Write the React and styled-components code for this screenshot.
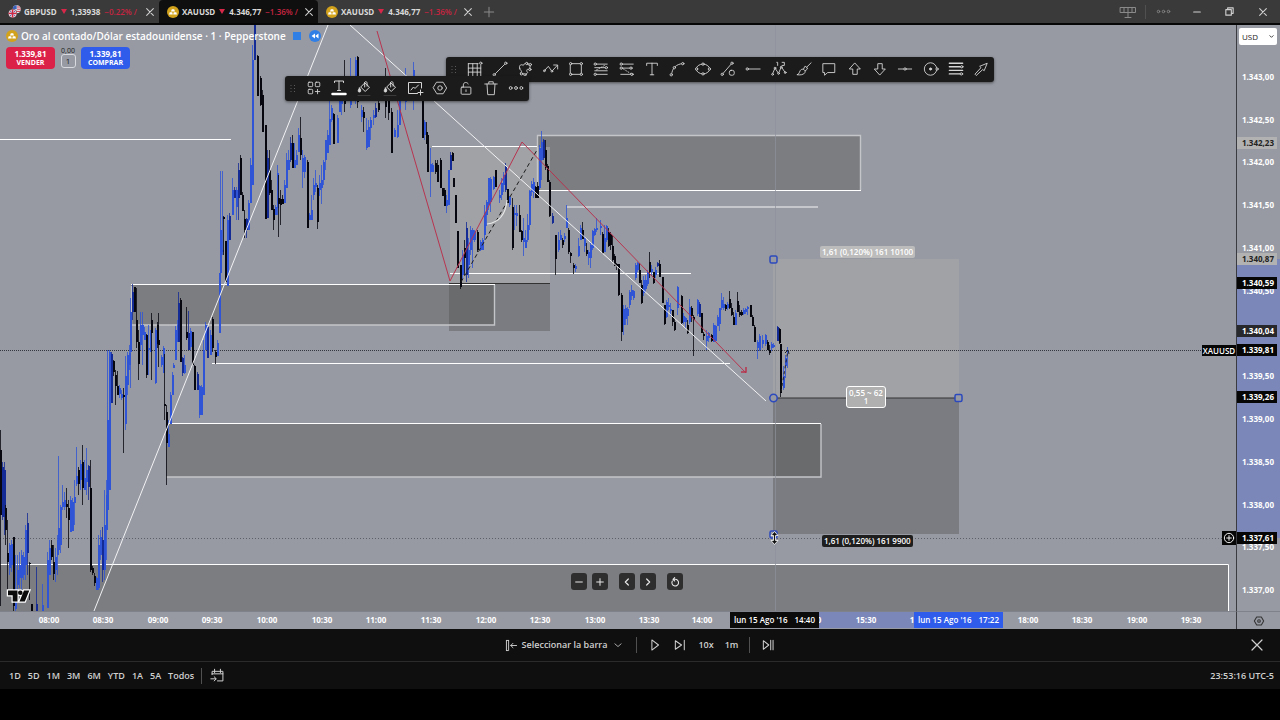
import styled, { createGlobalStyle, css } from "styled-components";

const GlobalStyle = createGlobalStyle`
  * {
    box-sizing: border-box;
  }
  body {
    margin: 0;
    background-color: #000;
    font-family: "Open Sans", "Noto Sans", sans-serif;
    font-size: 9px;
    line-height: 12px;
    color: #d0d0d0;
  }
  button, select, input {
    font: inherit;
    color: inherit;
    border: 0;
    padding: 0;
    margin: 0;
    background: none;
  }
  svg {
    display: block;
    flex-shrink: 0;
  }
`;

const Page = styled.div`
  display: flex;
  flex-direction: column;
  min-height: 100vh;
  overflow: hidden;
`;

/* ---------- tabs ---------- */

const TabBar = styled.header`
  display: flex;
  align-items: stretch;
  height: 25px;
  background-color: #3a3a3a;
  border-bottom: 2px solid #060606;
`;

const Tab = styled.div`
  display: flex;
  align-items: center;
  gap: 3px;
  width: 159px;
  padding: 0 1px 0 8px;
  border-radius: 4px 4px 0 0;
  font-size: 8px;
  font-weight: 700;
  white-space: nowrap;
  background-color: ${(props) => (props.$active ? "#0f0f0f" : "transparent")};
  color: #dadada;
`;

const TabQuote = styled.span`
  display: flex;
  flex: 1;
  align-items: center;
  gap: 4px;
  min-width: 0;
`;

const Change = styled.span`
  color: #c62440;
  font-weight: 600;
`;

const IconBtn = styled.button`
  display: flex;
  justify-content: center;
  align-items: center;
  width: ${(props) => props.$w || 16}px;
  color: ${(props) => props.$color || "#d0d0d0"};
`;

const WindowBtns = styled.div`
  display: flex;
  align-items: center;
  margin-left: auto;
`;

const Divider = styled.span`
  width: 1px;
  height: ${(props) => props.$h || 14}px;
  background-color: #505050;
`;

/* ---------- chart ---------- */

const ChartRow = styled.main`
  display: grid;
  grid-template-columns: minmax(0, 1fr) 44px;
  background-color: #979aa3;
`;

const ChartPane = styled.section`
  position: relative;
  height: 586px;
  overflow: hidden;
`;

const Legend = styled.div`
  position: absolute;
  top: 3px;
  left: 6px;
  display: flex;
  flex-direction: column;
  gap: 4px;
`;

const Title = styled.h1`
  display: flex;
  align-items: center;
  gap: 3px;
  margin: 0;
  height: 15px;
  font-size: 10px;
  font-weight: 600;
  color: #fff;
`;

const Flag = styled.span`
  width: 8px;
  height: 8px;
  margin-left: 4px;
  background-color: #2f7fe6;
`;

const ReplayBadge = styled.span`
  display: flex;
  margin-left: 5px;
`;

const Trade = styled.div`
  display: flex;
  gap: 5px;
`;

const TradeBtn = styled.button`
  width: 49px;
  height: 22px;
  border-radius: 4px;
  background-color: ${(props) => props.$bg};
  color: #fff;
  font-size: 8px;
  font-weight: 700;
  line-height: 9px;
`;

const TradeLabel = styled.span`
  display: block;
  font-size: 7px;
`;

const Spread = styled.div`
  display: flex;
  flex-direction: column;
  align-items: center;
  width: 16px;
  color: #202020;
  font-size: 7px;
  line-height: 7px;
`;

const Lots = styled.button`
  width: 15px;
  height: 14px;
  border: 1px solid #d9dae0;
  border-radius: 3px;
  font-size: 8px;
  line-height: 12px;
`;

const Toolbar = styled.div`
  position: absolute;
  top: ${(props) => props.$top}px;
  left: ${(props) => props.$left}px;
  display: flex;
  align-items: stretch;
  width: ${(props) => props.$w}px;
  height: 25px;
  border-radius: 3px;
  background-color: #1b1b1b;
  box-shadow: 0 1px 3px rgba(0, 0, 0, 0.5);
`;

const Grip = styled.span`
  display: flex;
  align-items: center;
  justify-content: center;
  width: 16px;
`;

const ToolBtn = styled.button`
  display: flex;
  flex: 1;
  justify-content: center;
  align-items: center;
  padding-bottom: 1px;
  color: #d6d6d6;
`;

const Tag = styled.span`
  position: absolute;
  top: ${(props) => props.$top}px;
  left: ${(props) => props.$left}px;
  padding: 0 2px;
  border-radius: 2px;
  background-color: ${(props) => props.$bg};
  border: ${(props) => (props.$outlined ? "1px solid #fff" : "0")};
  color: #fff;
  font-size: 8px;
  font-weight: 600;
  line-height: ${(props) => (props.$outlined ? 8 : 12)}px;
  text-align: center;
  white-space: nowrap;
  ${(props) =>
    props.$outlined &&
    css`
      width: 40px;
      padding: 2px 0;
      border-radius: 3px;
    `}
`;

const CrossTag = styled.span`
  position: absolute;
  right: 0;
  top: ${(props) => props.$top}px;
  display: flex;
  align-items: center;
  justify-content: center;
  width: ${(props) => props.$w}px;
  height: ${(props) => props.$h}px;
  background-color: #060606;
  color: #fff;
  font-size: 8px;
  font-weight: 600;
`;

const NavBtns = styled.div`
  position: absolute;
  bottom: 21px;
  left: 571px;
  display: flex;
  gap: 5px;
`;

const NavBtn = styled.button`
  display: flex;
  align-items: center;
  justify-content: center;
  width: 16px;
  height: 17px;
  margin-left: ${(props) => (props.$apart ? 6 : 0)}px;
  border-radius: 3px;
  background-color: #2e2e2e;
  color: #e8e8e8;
`;

const Logo = styled.svg`
  position: absolute;
  bottom: 7px;
  left: 6px;
`;

const PriceAxis = styled.aside`
  position: relative;
  overflow: hidden;
  border-left: 1px solid #3a3b40;
  font-size: 8px;
  font-weight: 700;
`;

const AxisRange = styled.span`
  position: absolute;
  background-color: #7b87b8;
  ${(props) =>
    props.$vertical
      ? css`
          left: 0;
          right: 0;
        `
      : css`
          top: 0;
          bottom: 1px;
        `}
`;

const PriceLabel = styled.span`
  position: absolute;
  left: 0;
  right: 3px;
  height: 12px;
  padding-left: 5px;
  line-height: 12px;
  background-color: ${(props) => props.$bg || "transparent"};
  color: ${(props) => props.$color || "#fff"};
`;

const Currency = styled.label`
  position: absolute;
  top: 3px;
  left: 2px;
  right: 3px;
  display: flex;
  align-items: center;
  height: 17px;
  padding-right: 3px;
  border-radius: 2px;
  background-color: #fff;
  color: #222;
`;

const CurrencySelect = styled.select`
  appearance: none;
  flex: 1;
  width: 0;
  height: 17px;
  padding-left: 3px;
  font-size: 8px;
  font-weight: 400;
`;

const TimeAxis = styled.div`
  position: relative;
  height: 18px;
  overflow: hidden;
  border-top: 1px solid #7f828a;
  font-size: 8px;
  font-weight: 700;
  line-height: 16px;
  color: #fff;
`;

const TimeLabel = styled.span`
  position: absolute;
  top: 0;
  transform: translateX(-50%);
`;

const TimeTag = styled.span`
  position: absolute;
  top: 0;
  display: flex;
  justify-content: center;
  gap: 7px;
  width: 89px;
  height: 16px;
  font-weight: 600;
  background-color: ${(props) => props.$bg};
`;

const Corner = styled.div`
  display: flex;
  align-items: center;
  justify-content: center;
  border-left: 1px solid #3a3b40;
  border-top: 1px solid #7f828a;
  color: #333;
`;

/* ---------- bottom bars ---------- */

const ReplayBar = styled.div`
  display: grid;
  grid-template-columns: 1fr auto 1fr;
  align-items: center;
  height: 33px;
  background-color: #0f0f0f;
  border-bottom: 1px solid #2b2b2b;
`;

const ReplayControls = styled.div`
  display: flex;
  grid-column: 2;
  align-items: center;
  gap: 11px;
`;

const TextBtn = styled.button`
  display: flex;
  align-items: center;
  gap: 4px;
  font-weight: 600;
  color: #d0d0d0;
`;

const CloseSlot = styled.div`
  display: flex;
  justify-content: flex-end;
  padding-right: 15px;
`;

const RangeBar = styled.footer`
  display: flex;
  align-items: center;
  gap: 7px;
  height: 27px;
  padding: 0 6px 0 9px;
  background-color: #0f0f0f;
`;

const RangeBtn = styled.button`
  font-weight: 600;
  color: #d0d0d0;
`;

const Clock = styled.span`
  margin-left: auto;
  font-weight: 600;
`;

/* ---------- icons ---------- */

const Icon = ({ size = 18, children, sw = 1 }) => (
  <svg
    width={size}
    height={size}
    viewBox="0 0 18 18"
    fill="none"
    stroke="currentColor"
    strokeWidth={sw}
    strokeLinecap="round"
    strokeLinejoin="round"
    aria-hidden="true"
  >
    {children}
  </svg>
);

const Dot = ({ x, y, r = 1.3 }) => <circle cx={x} cy={y} r={r} fill="#1b1b1b" />;

const CloseIcon = ({ size = 12, sw = 1.6 }) => (
  <Icon size={size} sw={sw}>
    <path d="M4 4l10 10M14 4L4 14" />
  </Icon>
);

const GoldIcon = ({ size = 12 }) => (
  <svg width={size} height={size} viewBox="0 0 12 12" aria-hidden="true">
    <circle cx="6" cy="6" r="6" fill="#d2a21c" />
    <path d="M4.8 3.2h2.4l.8 2.2H4zM2.7 6.2h2.5l.6 2.2H2zM6.8 6.2h2.5l.7 2.2H6.2z" fill="#fff" />
  </svg>
);

const PoundIcon = () => (
  <svg width="13" height="13" viewBox="0 0 13 13" aria-hidden="true">
    <circle cx="8.7" cy="4.3" r="4" fill="#e8e8f0" />
    <path d="M8.7.3a4 4 0 00-4 4h4z" fill="#3b62b8" />
    <path d="M9 2h3M9 4.2h3.7M6 6.4h6" stroke="#cf3a4c" />
    <circle cx="4.6" cy="8.4" r="4.5" fill="#3a3a3a" />
    <circle cx="4.6" cy="8.4" r="4" fill="#e9c9d4" />
    <path d="M4.6 4.4v8M.6 8.4h8" stroke="#d02842" strokeWidth="1.4" />
    <path d="M2 5.8l1.6 1.5M7.2 5.8L5.6 7.3M2 11l1.6-1.5M7.2 11L5.6 9.5" stroke="#5b62a8" />
  </svg>
);

const DownMark = () => (
  <svg width="6" height="5" viewBox="0 0 6 5" aria-hidden="true">
    <path d="M0 0h6L3 5z" fill="#d8284a" />
  </svg>
);

const GripDots = () => (
  <svg width="6" height="10" viewBox="0 0 6 10" fill="#5a5a5a" aria-hidden="true">
    {[1, 4, 7].map((y) => (
      <g key={y}>
        <rect x="0.5" y={y} width="1" height="1" />
        <rect x="4" y={y} width="1" height="1" />
      </g>
    ))}
  </svg>
);

const Bucket = () => (
  <Icon>
    <path d="M9.500 3.500l5 4.700-4.300 4.300-4.500-4.500 4-4v4" />
    <path d="M9.500 4c0-2 2.6-2 2.6.4v2.8" />
    <path d="M4.5 9c-2 3-1.5 4 0 4s1.8-1.8 0-4z" fill="currentColor" />
    <path d="M3 16.5h12" stroke="#3a3a3a" />
  </Icon>
);

const drawTools = [
  ["Cuadrícula", <><path d="M1.500 3h11M1.500 8h14M1.500 12.500h14M1.500 3v13.500M6.500 3v13.500M11.500 3v13.500M15.500 5v11.500" /><Dot x={15.5} y={2.5} /></>],
  ["Línea de tendencia", <><path d="M3.8 14.2L14.2 3.8" /><Dot x={2.5} y={15.5} /><Dot x={15.5} y={2.5} /></>],
  ["Curva", <><path d="M3 8c-1.5-3 2-5 4-3 1-3 5-3 5-1l3 1-1 5c-3-2-4 1-2 3l-3 3c-2 0-1-3-3-2l-2 1c-1-2 2-3 1-4-1-1-2-.5-2-3z" /><Dot x={11} y={2.8} /><Dot x={15} y={4} /><Dot x={14.5} y={9.5} /><Dot x={5} y={14.5} /><Dot x={9} y={15.5} /></>],
  ["Trayectoria", <><path d="M1.500 11L6 6l4 5.500L16 5M12 4.500h4.500V9" /><Dot x={1.5} y={11} r={1} /><Dot x={10} y={11.5} r={1} /></>],
  ["Rectángulo", <><path d="M3 3h12v12H3z" /><Dot x={3} y={3} /><Dot x={15} y={3} /><Dot x={3} y={15} /><Dot x={15} y={15} /></>],
  ["Retroceso de Fibonacci", <><path d="M2 3.500h14M2 7.500h12M2 11h14M2 15h14" /><path d="M4 10l10-5.500" strokeDasharray="1 2" /><Dot x={2.5} y={3.5} /><Dot x={2.5} y={15} /><Dot x={15} y={7.5} /></>],
  ["Extensión de Fibonacci", <><path d="M2 3.500h14M2 8h12M2 15h14" /><path d="M5 9l8 5" strokeDasharray="1 2" /><Dot x={2.5} y={3.5} /><Dot x={2.5} y={8} /><Dot x={13.5} y={8} /><Dot x={14.5} y={15} /></>],
  ["Texto", <path d="M3 5V2.500h12V5M9 2.500v13M7 15.500h4" />],
  ["Arco", <><path d="M3 15C3.500 8 8 3.500 15 3" /><Dot x={2.5} y={15.5} /><Dot x={6} y={7.5} /><Dot x={15.5} y={3} /></>],
  ["Elipse", <><ellipse cx="9" cy="9" rx="7.500" ry="5.500" /><Dot x={1.8} y={9} /><Dot x={16.2} y={9} /><Dot x={9} y={3.5} /><Dot x={9} y={14.5} /></>],
  ["Línea y forma", <><path d="M3 14.500L13 3" /><Dot x={2.5} y={15} /><Dot x={13.5} y={2.5} /><rect x="10.500" y="10.500" width="5.500" height="5.500" rx="2" /></>],
  ["Rayo horizontal", <><path d="M3 9h14" /><Dot x={2.5} y={9} /></>],
  ["Ondas de Elliott", <><path d="M1.500 15l3-7 4 6 3-7.500L16 13M6.500 1.500h1v3.500M12.500 1.500h2.500v3.500h-2.500" /><Dot x={1.8} y={15} r={1} /><Dot x={4.5} y={8} r={1} /><Dot x={8.5} y={14} r={1} /><Dot x={11.5} y={7} r={1} /><Dot x={16} y={13} r={1} /></>],
  ["Pincel", <><path d="M1.500 15.500c3-1 2-4.500 4.500-6 2.500-1 5 1 4 3.500-1 2.500-5.500 3-8.500 2.500z" /><path d="M8.500 9L10 6c1.500 0 2.800 1.300 2.800 3l-2.300 2M12 7l5-5" /></>],
  ["Nota", <path d="M2.500 3h13v10h-8l-3.500 3v-3H2.500z" />],
  ["Flecha arriba", <path d="M9 2.500l6 6.500h-3.500v6h-5V9H3z" />],
  ["Flecha abajo", <path d="M9 15.500L15 9h-3.500V3h-5v6H3z" />],
  ["Línea horizontal", <><path d="M1.500 9h15" /><Dot x={9} y={9} /></>],
  ["Círculo", <><circle cx="8.500" cy="9" r="7" /><circle cx="8.500" cy="9" r="1.200" fill="currentColor" /><Dot x={15.8} y={9} /></>],
  ["Niveles", <><path d="M1.500 2.500h15M1.500 6.500h15M1.500 10.500h15M1.500 14.500h15" strokeWidth="1.500" /><Dot x={15.5} y={6.5} /><Dot x={15} y={14.5} /></>],
  ["Flecha", <path d="M2.500 14.500L9 7.500 7.500 6 16 2.500 12.500 11 11 9.500 4 16z" />],
];

const editTools = [
  ["Plantillas", <Icon key="i" size={16}><rect x="2.500" y="2.500" width="5" height="5" rx="1" /><rect x="10.500" y="2.500" width="5" height="5" rx="1" /><rect x="2.500" y="10.500" width="5" height="5" rx="1" /><path d="M13 10.500v5M10.500 13H15.500" /></Icon>],
  ["Color del texto", <Icon key="i"><path d="M4.500 3.500V2h9v1.500M9 2v9.500M7.500 11.500h3" /><path d="M2.500 15h13" strokeWidth="2.500" stroke="#fff" /></Icon>],
  ["Color de fondo", <Bucket key="i" />],
  ["Color de relleno", <Bucket key="i" />],
  ["Imagen", <Icon key="i"><path d="M15.500 9V3.500h-13v11h9" /><path d="M5 11l2.500-3 1.500 1.500L12.500 6M14.500 11v5M12 13.500h5" /></Icon>],
  ["Configuración", <Icon key="i" size={16}><path d="M5.500 2.500h7L16.500 9l-4 6.500h-7L1.500 9z" /><circle cx="9" cy="9" r="2.500" /></Icon>],
  ["Bloquear", <Icon key="i" size={16}><rect x="3.500" y="8" width="11" height="8" rx="1" /><path d="M6 8V5.500c0-3.500 5-3.500 5.500-1M9 11v2" /></Icon>],
  ["Eliminar", <Icon key="i" size={16}><path d="M2 4.500h14M6.500 4V2h5v2M4.500 4.500l.8 12h7.400l.8-12" /></Icon>],
  ["Más", <Icon key="i" size={16}><circle cx="3" cy="9" r="1.600" /><circle cx="9" cy="9" r="1.600" /><circle cx="15" cy="9" r="1.600" /></Icon>],
];

/* ---------- data ---------- */

// x, high, body top, body bottom, low, k = bearish / b = bullish / d = dark bullish
const candles = `
0 430 450 515 606 k;2 462 467 517 520 d;4 462 470 517 535 d;5 505 508 530 545 k;7 520 553 562 594 k;9 543 545 568 575 b;11 540 544 565 572 b;13 537 537 606 612 k;
15 555 595 609 611 b;17 555 570 585 600 b;19 552 565 578 588 b;21 550 555 578 595 b;23 552 557 575 580 b;25 525 530 565 580 b;27 513 523 553 575 d;29 562 563 564 600 k;
31 604 604 611 611 k;36 567 604 611 611 d;42 584 605 611 611 b;47 552 560 608 608 b;49 540 548 575 575 b;51 540 545 557 560 k;53 545 562 574 580 k;55 548 557 570 582 b;
57 535 540 555 575 b;58 456 528 550 553 b;60 505 507 545 553 b;62 485 502 507 510 b;64 492 500 507 510 b;66 488 504 507 518 k;68 500 508 520 548 k;70 496 500 532 532 b;
72 498 502 531 531 b;74 480 497 503 525 b;76 447 476 484 486 b;78 467 470 484 495 k;80 460 464 480 490 b;82 445 462 488 505 k;84 460 478 490 490 b;86 448 470 482 495 b;
88 465 466 487 500 d;90 460 488 570 572 k;92 566 568 573 575 k;94 573 576 583 586 k;96 577 578 590 590 b;98 535 545 588 590 b;100 530 537 555 560 b;102 527 540 570 582 d;
104 490 525 570 580 b;106 480 495 530 560 b;107 350 420 510 515 b;109 350 352 490 490 b;111 352 354 403 403 d;113 360 361 372 376 k;115 370 375 386 405 k;117 371 386 395 395 k;
119 385 388 394 398 b;121 390 394 398 400 b;123 388 395 397 453 k;125 356 376 424 430 b;127 352 355 385 395 b;129 345 353 365 370 b;130 298 312 352 388 b;132 284 292 312 320 d;
134 287 287 312 312 k;136 288 320 342 348 k;138 330 342 364 380 k;140 312 325 345 350 b;142 312 325 335 365 b;144 327 332 340 340 b;146 334 335 375 378 k;148 325 348 350 375 b;
150 330 333 352 352 b;151 313 320 333 380 k;155 328 330 383 384 b;157 322 325 344 348 k;158 313 340 345 367 k;161 355 357 365 367 b;163 346 348 373 373 b;164 354 404 406 420 k;
166 405 412 443 485 k;168 420 434 447 447 b;170 392 395 424 424 b;172 372 375 395 395 b;173 363 365 368 368 b;175 326 330 360 360 b;177 320 325 342 342 b;178 292 303 342 342 d;
180 298 300 362 362 k;182 357 358 373 376 d;184 355 365 373 374 b;186 307 332 338 340 k;188 311 333 350 350 d;190 328 331 347 350 b;192 332 332 365 365 k;194 365 366 390 390 k;
197 372 374 390 390 d;199 385 386 415 418 b;201 385 387 415 415 b;203 340 350 395 395 b;205 322 325 350 350 b;207 325 327 358 358 d;210 330 335 355 355 b;212 317 319 348 352 k;
215 350 352 357 364 k;217 340 343 356 356 b;219 273 273 333 333 b;220 171 230 273 273 b;222 171 250 252 255 b;223 216 217 219 255 k;225 241 241 282 282 k;227 215 220 286 286 b;
229 213 216 240 240 d;232 178 190 215 215 b;234 187 190 198 198 d;236 187 190 207 220 b;238 163 170 198 220 d;240 155 158 195 195 k;242 192 195 211 211 k;244 210 219 230 238 k;
246 218 219 230 238 d;248 200 203 230 230 b;250 158 165 203 203 b;252 45 60 185 185 b;254 25 25 60 60 d;257 55 56 96 96 k;260 76 78 105 106 k;262 90 95 132 132 k;
265 125 125 219 219 k;267 150 158 218 218 d;269 150 170 193 195 k;271 180 190 210 210 k;273 205 209 220 230 k;275 205 207 215 215 b;277 165 173 208 215 b;278 175 198 204 237 k;
280 190 199 205 225 k;282 195 199 204 204 k;284 180 185 203 203 b;286 153 160 188 188 b;288 150 160 170 170 b;290 137 143 160 162 d;292 135 143 168 168 k;294 143 160 168 168 b;
296 150 155 165 165 b;298 128 135 152 152 b;300 117 138 155 160 k;302 150 158 172 188 b;304 155 157 172 178 b;307 160 162 228 228 k;309 213 215 220 220 b;311 195 210 220 220 b;
313 178 185 195 200 b;315 170 183 187 192 b;317 185 188 222 229 k;319 175 183 190 196 b;321 165 180 188 204 b;323 160 162 180 185 b;325 150 140 160 170 b;327 130 135 153 153 b;
329 100 119 145 145 b;331 105 108 120 122 b;333 113 114 144 144 k;337 115 118 143 143 b;339 95 98 112 112 b;341 80 92 104 115 b;344 60 95 104 112 k;350 58 85 105 108 b;
355 57 60 100 104 b;357 56 57 102 108 k;361 105 110 117 122 b;363 107 112 118 132 k;366 118 130 148 150 b;368 120 127 147 147 b;370 117 120 128 140 b;373 110 115 118 125 b;
375 103 108 117 118 d;378 98 103 110 112 k;385 68 95 107 118 k;388 95 99 113 120 k;391 108 112 153 153 k;394 128 130 137 137 b;397 110 125 137 138 b;399 95 100 125 125 b;
405 68 98 102 110 b;413 62 70 100 110 b;422 95 98 138 138 k;424 120 122 135 140 b;426 122 132 144 144 k;427 132 135 172 172 k;430 148 164 172 197 b;432 163 165 172 172 b;
435 160 163 172 174 k;437 160 165 182 182 k;440 158 160 188 188 k;442 188 188 196 196 k;444 188 190 206 206 k;446 195 200 206 213 b;448 170 170 205 205 b;450 152 155 170 170 d;
452 152 153 161 161 k;453 178 178 187 187 k;455 195 195 223 223 k;457 231 231 268 268 k;460 265 265 287 289 k;462 250 255 275 280 b;464 240 248 258 275 k;466 222 228 275 282 d;
468 238 250 265 278 b;470 226 230 250 255 b;472 228 230 240 268 b;474 230 231 240 242 b;477 230 232 250 252 k;480 240 242 250 251 b;482 238 240 250 250 b;484 205 213 235 240 b;
486 200 202 215 226 b;488 178 178 205 210 b;490 177 179 202 212 b;493 176 177 189 190 b;495 170 170 187 187 k;499 190 195 198 203 b;501 178 183 195 200 b;503 172 175 185 192 b;
505 163 166 190 192 d;507 189 189 203 203 k;509 196 197 205 207 b;512 198 207 248 250 k;514 205 213 215 230 b;516 205 213 216 226 b;519 205 215 232 232 k;521 230 231 240 242 k;
523 218 238 242 256 b;525 230 240 248 248 b;527 214 225 240 242 b;529 190 191 225 230 b;531 181 184 192 196 b;533 178 182 193 198 b;535 186 187 198 198 k;537 182 186 198 198 k;
539 145 148 188 190 b;541 131 142 160 180 b;543 139 140 158 160 d;545 140 150 168 170 k;547 164 166 182 182 k;549 180 182 216 217 k;552 213 216 223 224 d;555 235 235 259 275 k;
558 232 240 250 252 b;560 230 235 240 240 b;562 238 240 245 248 k;564 233 236 239 242 b;566 205 218 228 228 b;568 228 230 252 254 k;570 252 253 256 263 k;573 263 265 268 274 k;
575 264 266 269 272 b;578 238 246 256 257 b;580 225 228 240 240 b;582 222 230 239 239 k;584 236 238 246 252 b;586 243 250 254 256 k;588 250 252 258 265 b;590 243 245 258 268 b;
592 230 231 248 250 b;594 228 229 235 236 b;596 218 228 230 232 b;600 220 226 228 235 b;602 232 234 253 254 k;604 225 238 252 252 b;606 225 226 240 242 b;608 228 232 246 247 k;
610 232 234 245 250 k;612 235 246 260 262 k;614 254 256 266 266 k;616 263 264 266 270 k;618 264 264 295 296 k;621 293 295 332 341 k;623 305 309 325 335 b;625 305 308 319 325 b;
627 307 309 316 325 b;629 290 292 305 308 b;631 285 290 296 300 b;633 290 291 298 300 b;635 263 265 278 280 b;637 262 263 270 272 b;639 263 270 283 283 k;641 280 285 303 304 k;
643 276 280 293 296 b;645 275 280 289 292 b;647 270 272 284 286 b;649 252 262 272 278 k;651 265 269 272 276 b;653 272 272 283 284 k;655 267 270 275 278 b;657 262 263 266 267 d;
659 260 264 277 277 k;662 277 277 303 303 k;664 305 305 324 325 k;666 300 302 317 318 b;668 298 305 307 310 b;670 303 309 311 316 b;672 310 310 322 326 k;674 318 322 330 331 k;
677 286 287 308 315 b;681 295 296 323 324 k;683 313 316 322 324 b;685 317 318 322 328 b;687 320 325 333 334 k;689 299 307 322 324 b;691 306 308 316 322 k;693 315 317 320 356 k;
697 299 300 314 316 b;699 302 304 317 317 d;701 313 313 333 333 k;703 332 334 336 340 k;706 330 336 341 350 b;708 332 333 338 342 b;711 334 335 341 342 k;713 323 325 342 342 b;
715 325 326 341 341 b;717 315 317 326 326 b;719 308 308 324 331 b;721 293 300 308 310 b;723 297 304 308 310 b;725 304 305 309 311 k;727 302 304 308 310 b;729 291 299 308 309 k;
731 303 308 315 316 k;733 312 317 325 325 k;735 310 313 325 325 b;737 292 301 312 312 k;739 305 312 315 317 k;741 310 312 315 316 k;743 308 310 314 315 b;745 308 309 312 314 b;
747 306 307 309 315 b;750 305 305 317 317 k;752 315 317 326 326 k;754 325 327 342 342 k;757 340 342 348 359 b;759 334 336 350 351 b;762 335 340 344 348 b;765 334 335 344 346 b;
767 340 342 350 350 k;769 345 350 353 355 k;771 342 344 348 351 b;773 343 345 347 348 b;777 326 327 341 341 d;779 328 329 343 344 k;780 344 344 393 397 k;783 366 376 388 390 b;
785 355 358 366 378 b;787 347 350 352 368 b`
  .trim()
  .split(";")
  .map((row) => {
    const [x, hi, top, bottom, lo, tone] = row.trim().split(" ");
    return { x: +x, hi: +hi, top: +top, bottom: +bottom, lo: +lo, tone };
  });

const tones = { k: "#07080f", b: "#2f54d6", d: "#142a94" };

const prices = [
  ["1.343,00", 77], ["1.342,50", 120], ["1.342,00", 162], ["1.341,50", 205],
  ["1.341,00", 248], ["1.340,50", 291], ["1.339,50", 376], ["1.339,00", 419],
  ["1.338,50", 462], ["1.338,00", 505], ["1.337,50", 547], ["1.337,00", 590],
];

const priceTags = [
  ["1.342,23", 143, "#b2b2b2", "#222"],
  ["1.340,87", 259, "#b2b2b2", "#222"],
  ["1.340,59", 283, "#060606"],
  ["1.340,04", 331, "#26282c"],
  ["1.339,81", 350, "#060606"],
  ["1.339,26", 397, "#060606"],
  ["1.337,61", 538, "#060606"],
];

const times = [
  ["08:00", 49], ["08:30", 103], ["09:00", 158], ["09:30", 212], ["10:00", 267],
  ["10:30", 322], ["11:00", 376], ["11:30", 431], ["12:00", 486], ["12:30", 540],
  ["13:00", 595], ["13:30", 649], ["14:00", 702], ["15:00", 811], ["15:30", 866],
  ["17:00", 920], ["18:00", 1028], ["18:30", 1082], ["19:00", 1137], ["19:30", 1191],
];

const ranges = ["1D", "5D", "1M", "3M", "6M", "YTD", "1A", "5A", "Todos"];

const TOP = 25;

/* ---------- parts ---------- */

const Chart = () => (
  <svg width="1236" height="586" viewBox={`0 ${TOP} 1236 586`} fill="none" aria-hidden="true">
    <rect x="131" y="285" width="364" height="40" fill="#7b7d80" />
    <rect x="166" y="424" width="655" height="53" fill="#7b7d80" />
    <rect x="538" y="135" width="323" height="55" fill="#7b7d80" />
    <rect x="-2" y="564" width="1231" height="60" fill="#7b7d80" />
    <rect x="450" y="147" width="100" height="136" fill="#a9a9a9" fillOpacity="0.6" />
    <rect x="449" y="283" width="101" height="48" fill="#505050" fillOpacity="0.4" />
    <rect x="773" y="259" width="186" height="139" fill="#a9a9a9" fillOpacity="0.6" />
    <rect x="773" y="398" width="186" height="136" fill="#505050" fillOpacity="0.4" />
    <path d="M131 284.500H495M169 423.500H821M538 190.500H861M0 564.500H1228.500V611" stroke="#fff" />
    <path d="M131.500 286V325H494.500V285M166 477H821V424M537.500 190V135.500H860.500V190" stroke="#c4c5c8" strokeWidth="1.400" />
    <path d="M449 283.500H550" stroke="#333" />
    <path d="M0 139.500H231M432 146.500H537M450 273.500H691M212 363.500H730" stroke="#fff" />
    <path d="M567 207H818" stroke="#d5d6da" strokeWidth="1.400" />
    <path d="M775.500 25V611" stroke="#8f929b" strokeOpacity="0.7" />
    <path d="M0 350.500H1236" stroke="#33363e" strokeDasharray="1 1" />
    <path d="M0 538.500H1236" stroke="#5c5f69" strokeDasharray="1 2" />

    {candles.map((c) => (
      <g key={c.x} fill={tones[c.tone]}>
        <rect x={c.x} y={c.hi} width="1" height={Math.max(c.lo - c.hi, 1)} fillOpacity="0.8" />
        <rect x={c.x} y={c.top} width="2" height={Math.max(c.bottom - c.top, 1)} />
      </g>
    ))}

    <path d="M94 611L328 25M350 25L766 401" stroke="#f2f2f4" />
    <path d="M377 31L450 281L522 142L746 373" stroke="#b8344f" />
    <path d="M741 372h5v-5" stroke="#b8344f" strokeWidth="1.500" />
    <path d="M461 282L537 150" stroke="#1b1b1b" strokeDasharray="4 3" />
    <path d="M487 224q18-2 20-24" stroke="#e8e8e8" strokeWidth="1.200" />

    <path d="M781 392L788 350" stroke="#222" strokeDasharray="3 3" />
    <path d="M785 353l3-3 1 4" stroke="#222" />
    <path d="M773 398H959" stroke="#333" />
    <g stroke="#2c49bd" strokeWidth="1.500" fill="#979aa3">
      <rect x="770" y="256" width="7" height="7" rx="1.500" />
      <rect x="955" y="394.500" width="7" height="7" rx="1.500" />
      <rect x="770" y="531" width="7" height="7" rx="1.500" />
      <circle cx="773.500" cy="398" r="3.700" />
    </g>
    <path d="M774.500 531.500l3.500 4h-2.500v5h2.500l-3.500 4-3.500-4h2.500v-5h-2.500z" fill="#111" stroke="#fff" strokeWidth="0.800" />
  </svg>
);

const QuoteTab = ({ icon, symbol, price, change, active }) => (
  <Tab $active={active}>
    {icon}
    <TabQuote>
      <span>{symbol}</span>
      <DownMark />
      <span>{price}</span>
      <Change>{change} /</Change>
    </TabQuote>
    <IconBtn aria-label="Cerrar pestaña">
      <CloseIcon />
    </IconBtn>
  </Tab>
);

const App = () => {
  return (
    <Page>
      <GlobalStyle />
      <TabBar>
        <QuoteTab icon={<PoundIcon />} symbol="GBPUSD" price="1,33938" change="−0.22%" />
        <QuoteTab icon={<GoldIcon />} symbol="XAUUSD" price="4.346,77" change="−1.36%" active />
        <QuoteTab icon={<GoldIcon />} symbol="XAUUSD" price="4.346,77" change="−1.36%" />
        <IconBtn $w={24} $color="#8a8a8a" aria-label="Nueva pestaña">
          <Icon size={14} sw={1.3}><path d="M9 3v12M3 9h12" /></Icon>
        </IconBtn>
        <WindowBtns>
          <IconBtn $w={34} $color="#8a8a8a" aria-label="Diseño">
            <Icon><path d="M1.500 4.500h15v5h-15zM9 4.500v10M6 14.500h6M5 4.500v5M13 4.500v5" /></Icon>
          </IconBtn>
          <Divider />
          <IconBtn $w={34} $color="#8a8a8a" aria-label="Más opciones">
            <Icon size={15}><circle cx="3" cy="9" r="1.500" /><circle cx="9" cy="9" r="1.500" /><circle cx="15" cy="9" r="1.500" /></Icon>
          </IconBtn>
          <IconBtn $w={33} aria-label="Minimizar">
            <Icon size={10} sw={2}><path d="M3 9h12" /></Icon>
          </IconBtn>
          <IconBtn $w={33} aria-label="Restaurar">
            <Icon size={11} sw={1.8}><path d="M3 6h9v9H3zM6 6V3h9v9h-3" /></Icon>
          </IconBtn>
          <IconBtn $w={34} aria-label="Cerrar">
            <CloseIcon />
          </IconBtn>
        </WindowBtns>
      </TabBar>

      <ChartRow>
        <ChartPane>
          <Chart />
          <Legend>
            <Title>
              <GoldIcon />
              Oro al contado/Dólar estadounidense · 1 · Pepperstone
              <Flag />
              <ReplayBadge>
                <svg width="12" height="12" viewBox="0 0 12 12" aria-hidden="true">
                  <circle cx="6" cy="6" r="6" fill="#2f7fe6" />
                  <path d="M6 3.500v5L2.600 6zM9.500 3.500v5L6.200 6z" fill="#fff" />
                </svg>
              </ReplayBadge>
            </Title>
            <Trade>
              <TradeBtn $bg="#dc2148">
                1.339,81
                <TradeLabel>VENDER</TradeLabel>
              </TradeBtn>
              <Spread>
                0,00
                <Lots aria-label="Lotes">1</Lots>
              </Spread>
              <TradeBtn $bg="#2f5ceb">
                1.339,81
                <TradeLabel>COMPRAR</TradeLabel>
              </TradeBtn>
            </Trade>
          </Legend>

          <Toolbar $top={32} $left={446} $w={548}>
            <Grip><GripDots /></Grip>
            {drawTools.map(([name, shape]) => (
              <ToolBtn key={name} aria-label={name}>
                <Icon size={16}>{shape}</Icon>
              </ToolBtn>
            ))}
          </Toolbar>
          <Toolbar $top={51} $left={285} $w={244}>
            <Grip><GripDots /></Grip>
            {editTools.map(([name, icon]) => (
              <ToolBtn key={name} aria-label={name}>
                {icon}
              </ToolBtn>
            ))}
          </Toolbar>

          <Tag $top={221} $left={820} $bg="#bcbcbc">1,61 (0,120%) 161 10100</Tag>
          <Tag $top={361} $left={846} $bg="#b0b0b0" $outlined>
            0,55 ~ 62<br />1
          </Tag>
          <Tag $top={510} $left={822} $bg="#1e1e1e">1,61 (0,120%) 161 9900</Tag>

          <CrossTag $top={320} $w={34} $h={11}>XAUUSD</CrossTag>
          <CrossTag $top={506} $w={14} $h={14}>
            <Icon size={12} sw={1.4}><circle cx="9" cy="9" r="7" /><path d="M9 5.500v7M5.500 9h7" /></Icon>
          </CrossTag>

          <NavBtns>
            <NavBtn aria-label="Alejar"><Icon size={12} sw={1.5}><path d="M4 9h10" /></Icon></NavBtn>
            <NavBtn aria-label="Acercar"><Icon size={12} sw={1.5}><path d="M4 9h10M9 4v10" /></Icon></NavBtn>
            <NavBtn $apart aria-label="Izquierda"><Icon size={12} sw={1.8}><path d="M11 4.500L6.500 9l4.500 4.500" /></Icon></NavBtn>
            <NavBtn aria-label="Derecha"><Icon size={12} sw={1.8}><path d="M7 4.500L11.500 9 7 13.500" /></Icon></NavBtn>
            <NavBtn $apart aria-label="Restablecer"><Icon size={12} sw={1.6}><path d="M5 7.500a5 5 0 104-2.500H6.500M8.500 2.500L6 5l2.500 2.500" /></Icon></NavBtn>
          </NavBtns>

          <Logo width="25" height="16" viewBox="0 0 25 16" aria-hidden="true">
            <path
              d="M2 2.500h9.500v11H6.700V7.200H2zM14.300 2.500a2.300 2.300 0 110 4.600 2.300 2.300 0 010-4.600zM18 2.500h5.300L18.800 13.500h-5.300z"
              fill="#0b0b0b"
              stroke="#fff"
              strokeWidth="2.400"
              paintOrder="stroke"
            />
          </Logo>
        </ChartPane>

        <PriceAxis>
          <AxisRange $vertical style={{ top: 259 - TOP, height: 279 }} />
          {prices.map(([text, y]) => (
            <PriceLabel key={text} style={{ top: y - TOP - 6 }}>{text}</PriceLabel>
          ))}
          {priceTags.map(([text, y, bg, color]) => (
            <PriceLabel key={text} $bg={bg} $color={color} style={{ top: y - TOP - 6 }}>
              {text}
            </PriceLabel>
          ))}
          <Currency>
            <CurrencySelect aria-label="Divisa" defaultValue="USD">
              <option>USD</option>
              <option>EUR</option>
            </CurrencySelect>
            <Icon size={5} sw={3}><path d="M3 6l6 6 6-6" /></Icon>
          </Currency>
        </PriceAxis>

        <TimeAxis>
          <AxisRange style={{ left: 730, width: 273 }} />
          {times.map(([text, x]) => (
            <TimeLabel key={text} style={{ left: x }}>{text}</TimeLabel>
          ))}
          <TimeTag $bg="#0b0b0b" style={{ left: 730 }}>
            <span>lun 15 Ago '16</span>
            <span>14:40</span>
          </TimeTag>
          <TimeTag $bg="#2f5ceb" style={{ left: 914 }}>
            <span>lun 15 Ago '16</span>
            <span>17:22</span>
          </TimeTag>
        </TimeAxis>
        <Corner>
          <Icon size={12} sw={1.6}><path d="M5.500 3h7L16 9l-3.500 6h-7L2 9z" /><circle cx="9" cy="9" r="2" /></Icon>
        </Corner>
      </ChartRow>

      <ReplayBar>
        <ReplayControls>
          <TextBtn>
            <Icon size={13} sw={1.3}><path d="M2 2v14M5 2v14H2M2 2h3M16 9H8M11 6L8 9l3 3" /></Icon>
            Seleccionar la barra
            <Icon size={14}><path d="M5 7.500L9 11l4-3.500" /></Icon>
          </TextBtn>
          <Divider $h={16} />
          <IconBtn $w={14} aria-label="Reproducir"><Icon size={14} sw={1.3}><path d="M5 2.500l8.500 6.500L5 15.500z" /></Icon></IconBtn>
          <IconBtn $w={14} aria-label="Avanzar"><Icon size={14} sw={1.3}><path d="M3 3.500L11 9l-8 5.500zM14.500 3v12" /></Icon></IconBtn>
          <TextBtn>10x</TextBtn>
          <TextBtn>1m</TextBtn>
          <Divider $h={16} />
          <IconBtn $w={14} aria-label="Ir al final"><Icon size={14} sw={1.3}><path d="M3 3.500L10 9l-7 5.500zM12.500 3v12M15.500 3v12" /></Icon></IconBtn>
        </ReplayControls>
        <CloseSlot>
          <IconBtn aria-label="Cerrar repetición"><CloseIcon size={18} sw={1.2} /></IconBtn>
        </CloseSlot>
      </ReplayBar>

      <RangeBar>
        {ranges.map((range) => (
          <RangeBtn key={range}>{range}</RangeBtn>
        ))}
        <Divider $h={16} />
        <IconBtn aria-label="Ir a la fecha">
          <Icon size={15} sw={1.2}><path d="M2.500 8V4h13v11.500H9M2.500 7h13M5.500 1.500v4M12.500 1.500v4M1 13h6M5 10.500L7.500 13 5 15.500" /></Icon>
        </IconBtn>
        <Clock>23:53:16 UTC-5</Clock>
      </RangeBar>
    </Page>
  );
};

export default App;
